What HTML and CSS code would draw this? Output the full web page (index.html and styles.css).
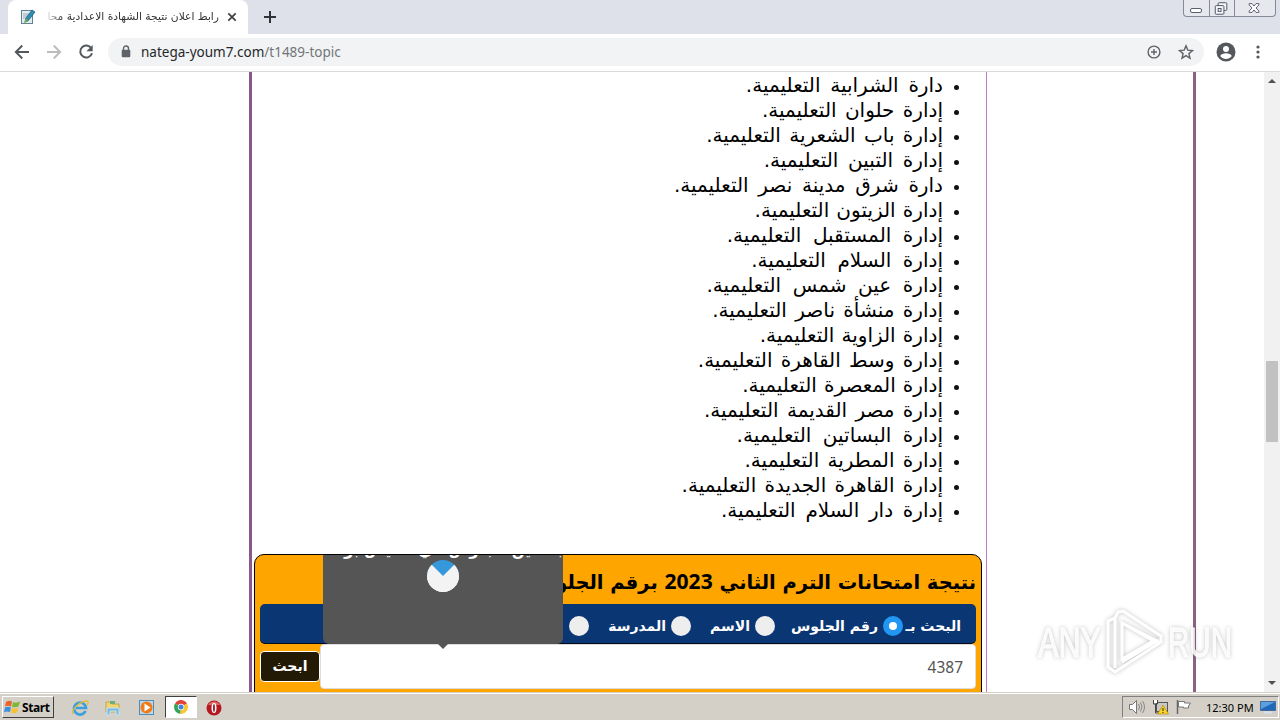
FILE: index.html
```html
<!doctype html>
<html lang="ar">
<head>
	<meta charset="UTF-8">
	<title>رابط اعلان نتيجة الشهادة الاعدادية</title>
	<link rel="stylesheet" href="styles.css">
</head>
<body>
	<div class="tabs">
		<div class="tab">
			<svg class="fav" width="16" height="16" viewBox="0 0 16 16"><rect x="1.500" y="1.500" width="11" height="13" fill="#e3ecf0" stroke="#628291"/><path d="M3 5h6M3 7h5M3 9h3" stroke="#9bb0ba"/><path d="M12 1l3 2-7 9-3 1 1-4z" fill="#2d8fb5" stroke="#23566b" stroke-width=".7"/><path d="M4 14l2-5 2.500 3z" fill="#6eaa57"/></svg>
			<span class="tab-title" dir="rtl">رابط اعلان نتيجة الشهادة الاعدادية محا</span>
			<svg width="10" height="10" viewBox="0 0 10 10"><path d="M1.300 1.300l7.400 7.400M8.700 1.300L1.300 8.700" stroke="#3c4043" stroke-width="1.700"/></svg>
		</div>
		<svg class="plus" width="12" height="12" viewBox="0 0 12 12"><path d="M6 0v12M0 6h12" stroke="#2f3337" stroke-width="2"/></svg>
		<div class="win">
			<svg width="25" height="16" viewBox="0 0 25 16"><rect x="6.500" y="8.500" width="11" height="4" rx="1.500" fill="#fff" stroke="#5a5f70"/></svg>
			<svg width="25" height="16" viewBox="0 0 25 16"><g fill="#f4f5f8" stroke="#4d5262"><rect x="8.500" y="2.500" width="9" height="8" rx="1"/><rect x="5.500" y="5.500" width="9" height="9" rx="1"/><rect x="8.500" y="8.500" width="3" height="3"/></g></svg>
			<svg width="41" height="16" viewBox="0 0 41 16"><path d="M14.500 3.500h3l2 2.500 2-2.500h3v1.500l-3 3 3 3v1.500h-3l-2-2.500-2 2.500h-3V11l3-3-3-3z" fill="#fff" stroke="#5a5f70"/></svg>
		</div>
	</div>
	<div class="toolbar">
		<svg width="16" height="16" viewBox="0 0 16 16"><path d="M15 8H2M8.300 1.500L1.800 8l6.500 6.500" fill="none" stroke="#54585c" stroke-width="1.900"/></svg>
		<svg width="16" height="16" viewBox="0 0 16 16"><path d="M1 8h13M7.700 1.500L14.200 8l-6.500 6.500" fill="none" stroke="#babcbe" stroke-width="1.900"/></svg>
		<svg width="16" height="16" viewBox="0 0 16 16"><path d="M13.300 4.300A6 6 0 1 0 14 9.300" fill="none" stroke="#54585c" stroke-width="2"/><path d="M14.700 1v6.300H8.400z" fill="#54585c"/></svg>
		<div class="address">
			<svg width="10" height="13" viewBox="0 0 10 13"><path d="M2.500 6V3.500a2.500 2.500 0 0 1 5 0V6" fill="none" stroke="#5f6368" stroke-width="1.400"/><rect x=".7" y="4.800" width="8.600" height="7.400" rx="1" fill="#5f6368"/></svg>
			<span class="url">natega-youm7.com<i>/t1489-topic</i></span>
			<svg class="zoom" width="14" height="14" viewBox="0 0 14 14"><path d="M7 4v6M4 7h6" stroke="#5f6368" stroke-width="1.400"/><circle cx="7" cy="7" r="5.900" fill="none" stroke="#5f6368" stroke-width="1.400"/></svg>
			<svg class="star" width="16" height="16" viewBox="0 0 16 16"><path d="M8 1.800l1.800 4.300 4.700.4-3.600 3.100 1.100 4.600L8 11.700l-4 2.500 1.100-4.600-3.600-3.100 4.700-.4z" fill="none" stroke="#5f6368" stroke-width="1.400"/></svg>
		</div>
		<svg class="user" width="20" height="20" viewBox="0 0 20 20"><circle cx="10" cy="10" r="9.500" fill="#54575c"/><circle cx="10" cy="7" r="3" fill="#fff"/><path d="M4.200 14c1.600-3.600 10-3.600 11.600 0-2.800 3.900-8.800 3.900-11.600 0z" fill="#fff"/></svg>
		<svg width="4" height="14" viewBox="0 0 4 14"><g fill="#54575c"><circle cx="2" cy="2" r="1.600"/><circle cx="2" cy="7" r="1.600"/><circle cx="2" cy="12" r="1.600"/></g></svg>
	</div>
	<div class="view">
		<div class="wrap">
			<div class="post" dir="rtl">
				<ul class="list">
					<li class="m">دارة الشرابية التعليمية.</li>
					<li>إدارة حلوان التعليمية.</li>
					<li>إدارة باب الشعرية التعليمية.</li>
					<li class="m">إدارة التبين التعليمية.</li>
					<li class="m">دارة شرق مدينة نصر التعليمية.</li>
					<li class="s">إدارة الزيتون التعليمية.</li>
					<li class="l">إدارة المستقبل التعليمية.</li>
					<li class="l">إدارة السلام التعليمية.</li>
					<li class="l">إدارة عين شمس التعليمية.</li>
					<li>إدارة منشأة ناصر التعليمية.</li>
					<li class="s">إدارة الزاوية التعليمية.</li>
					<li>إدارة وسط القاهرة التعليمية.</li>
					<li class="s">إدارة المعصرة التعليمية.</li>
					<li>إدارة مصر القديمة التعليمية.</li>
					<li class="l">إدارة البساتين التعليمية.</li>
					<li>إدارة المطرية التعليمية.</li>
					<li>إدارة القاهرة الجديدة التعليمية.</li>
					<li class="m">إدارة دار السلام التعليمية.</li>
				</ul>
				<div class="search">
					<div class="title">نتيجة امتحانات الترم الثاني <span>2023</span> برقم الجلو</div>
					<div class="options">
						<span class="by">البحث بـ</span>
						<b class="radio on"></b><span class="o1">رقم الجلوس</span>
						<b class="radio"></b><span class="o2">الاسم</span>
						<b class="radio"></b><span class="o3">المدرسة</span>
						<b class="radio"></b>
					</div>
					<div class="row">
						<div class="input">4387</div>
						<div class="btn">ابحث</div>
					</div>
					<div class="tip">
						<p>بحسين الجلوس في الفيس بوك</p>
						<b class="loader"></b>
					</div>
					<b class="arrow"></b>
				</div>
			</div>
		</div>
		<div class="scroll">
			<b class="up"></b>
			<b class="thumb"></b>
			<b class="down"></b>
		</div>
		<div class="mark">
			<svg width="204" height="72" viewBox="0 0 204 72">
				<g class="mark-text"><text x="4" y="50" textLength="63" lengthAdjust="spacingAndGlyphs">ANY</text><text x="134" y="50" textLength="64" lengthAdjust="spacingAndGlyphs">RUN</text></g>
				<g class="mark-logo"><path d="M88 16v36l33-19z"/><path d="M84 5l5-1 38 25v6L87 61l-6 4-7-5V14l7-3z"/><path d="M81 11v50M88 16l35 20M88 55l37-22"/></g>
			</svg>
		</div>
	</div>
	<div class="taskbar">
		<div class="start">
			<svg width="17" height="16" viewBox="0 0 17 16"><path d="M2 3q3-2 6-.5L7 7.500Q4 6 1 7.500z" fill="#e8642b"/><path d="M9 3q3 1.500 7-.5l-1.500 5q-3 1.500-6.500.3z" fill="#7db83a"/><path d="M1 8.500Q4 7 7 8.500L5.800 13Q3 12 0 13.200z" fill="#3c8edb"/><path d="M8 9q3 1.300 6.300 0L13 13.500q-3 1.500-6 0z" fill="#f8c22e"/></svg>
			<span>Start</span>
		</div>
		<svg class="ie" width="18" height="18" viewBox="0 0 18 18"><path d="M14.500 12a6 6 0 1 1 .5-3H5" fill="none" stroke="#3ba0dc" stroke-width="2.700"/><path d="M2 15C-1 12 9 2 16 2c2 0 1 3 0 4" fill="none" stroke="#e5ba3b" stroke-width="1.300"/></svg>
		<svg class="folder" width="18" height="18" viewBox="0 0 18 18"><path d="M2 3h5l1 2h7v8H2z" fill="#f0d573" stroke="#c6a548"/><path d="M6 2h5v3H6z" fill="#6dae7c"/><path d="M3 9h12v7h-3v-4H6v4H3z" fill="#78b9e1" stroke="#c5e5f5"/></svg>
		<svg class="player" width="18" height="18" viewBox="0 0 18 18"><rect x="1.500" y="1.500" width="14" height="14" fill="#b9d9ef" stroke="#528cb5"/><circle cx="8.500" cy="8.500" r="6" fill="#f17b16"/><path d="M6.500 4.500l6 4-6 4z" fill="#fff"/></svg>
		<div class="active">
			<svg width="14" height="14" viewBox="0 0 14 14"><path d="M7 7L1 3.500a7 7 0 0 1 12 0z" fill="#df4335"/><path d="M7 7l-.5 7A7 7 0 0 1 1 3.500z" fill="#35a456"/><path d="M7 7l6-3.500A7 7 0 0 1 6.500 14z" fill="#f9c632"/><circle cx="7" cy="7" r="3.200" fill="#fff"/><circle cx="7" cy="7" r="2.500" fill="#4285d4"/></svg>
		</div>
		<svg class="opera" width="16" height="16" viewBox="0 0 16 16"><circle cx="8" cy="8" r="7.500" fill="#b51820"/><path d="M2 5a7 7 0 0 1 12 0z" fill="#db6a66"/><ellipse cx="8" cy="8" rx="2.500" ry="5" fill="#fff"/><ellipse cx="8" cy="8" rx=".9" ry="4" fill="#941018"/></svg>
		<div class="tray">
			<svg width="18" height="16" viewBox="0 0 18 16"><path d="M1.500 5.500h3l4-4v13l-4-4h-3z" fill="#fff" stroke="#777"/><path d="M10.500 5q2 3 0 6M12.500 3.500q3 4.500 0 9M14.500 2q4 6 0 12" fill="none" stroke="#888"/></svg>
			<svg width="18" height="16" viewBox="0 0 18 16"><rect x="4.500" y="3.500" width="11" height="9" fill="#c8c8c4" stroke="#555"/><path d="M1.500 1v4h4V1M3.500 5v9h4" fill="none" stroke="#444"/><path d="M2 1h3v3H2z" fill="#fff"/><path d="M11 6l5.500 9h-11z" fill="#fbd42b" stroke="#b78a08" stroke-width=".7"/><path d="M11 9v3M11 13v1" stroke="#222"/></svg>
			<svg width="18" height="16" viewBox="0 0 18 16"><path d="M1.500 1v14" stroke="#666" stroke-width="1.500"/><path d="M2.500 2.500h6v1.500h6l-2 3v2h-5V8h-5z" fill="#fff" stroke="#777"/></svg>
			<span class="clock">12:30 PM</span>
			<svg class="desk" width="16" height="14" viewBox="0 0 16 14"><path d="M.5 1.500h15v9H.5z" fill="#2268b8" stroke="#426b9e"/><path d="M1 2h14L1 9z" fill="#5ba0dd"/><path d="M4 12.500h8" stroke="#d5e2ee" stroke-width="2"/></svg>
		</div>
	</div>
</body>
</html>
```
FILE: styles.css
```css
*{margin:0;padding:0;box-sizing:border-box;}
ul{list-style:none;}
svg{display:block;flex:none;}
body{
	width:1280px;
	height:720px;
	overflow:hidden;
	background:#fff;
	font-family:"DejaVu Sans",sans-serif;
}
.tabs{
	display:flex;
	height:34px;
	background:#dee1e9;
}
.tab{
	display:flex;
	align-items:center;
	width:240px;
	margin-left:8px;
	padding:0 11px 0 12px;
	border-radius:8px 8px 0 0;
	background:#fff;
}
.tab-title{
	flex:1;
	height:18px;
	margin:0 8px 0 8px;
	overflow:hidden;
	white-space:nowrap;
	font-size:10.7px;
	line-height:18px;
	color:#333;
	-webkit-mask-image:linear-gradient(90deg,transparent,#000 20px);
}
.plus{margin:11px 0 0 16px;}
.win{
	display:flex;
	height:17px;
	margin:0 4px 0 auto;
	border:1px solid #858a99;
	border-top:none;
	border-radius:0 0 4px 4px;
	background:#e6e8ee;
}
.win svg+svg{border-left:1px solid #858a99;}
.toolbar{
	display:flex;
	align-items:center;
	height:38px;
	padding:0 20px 2px 14px;
	border-bottom:1px solid #d9dbdd;
}
.toolbar>svg+svg{margin-left:16px;}
.address{
	display:flex;
	align-items:center;
	width:1096px;
	height:28px;
	margin-left:14px;
	padding:0 10px 0 13px;
	border-radius:14px;
	background:#f1f3f4;
}
.url{
	margin-left:10px;
	font:13.5px "Noto Sans",sans-serif;
	color:#252729;
}
.url i{font-style:normal;color:#72767a;}
.zoom{margin-left:auto;}
.star{margin-left:17px;}
.toolbar .user{margin-left:12px;}
.toolbar>.user+svg{margin-left:20px;}
.view{
	position:relative;
	display:flex;
	height:620px;
	overflow:hidden;
}
.wrap{
	width:947px;
	margin-left:249px;
	border:3px solid #8a6384;
	border-width:0 3px;
	border-left-color:#8a588f;
}
.post{
	width:735px;
	height:620px;
	padding:1px 4px 0 2px;
	border-right:1px solid #c17bc8;
}
.list{
	padding-right:39px;
	font-size:20px;
	line-height:25px;
	word-spacing:2px;
	white-space:nowrap;
}
.list li{
	position:relative;
	height:25px;
}
.list .s{word-spacing:.8px;}
.list .m{word-spacing:3.4px;}
.list .l{word-spacing:5.2px;}
.list li:before{
	content:"";
	position:absolute;
	right:-16px;
	top:12px;
	width:5px;
	height:5px;
	border-radius:50%;
	background:#111;
}
.search{
	position:relative;
	width:728px;
	height:150px;
	margin-top:31px;
	padding:0 5px;
	border:1px solid #000;
	border-radius:10px;
	background:#ffa500;
}
.title{
	height:49px;
	font-size:19.5px;
	font-weight:bold;
	line-height:56px;
	white-space:nowrap;
}
.title span{
	font:bold 21px "Noto Sans",sans-serif;
}
.options{
	display:flex;
	align-items:center;
	height:40px;
	padding:4px 15px 0 0;
	border-bottom:1px solid #020b1c;
	border-radius:5px;
	background:#0a3673;
	color:#fff;
	font-size:14px;
	font-weight:bold;
	white-space:nowrap;
}
.by{width:58px;}
.o1{width:103px;}
.o2{width:59px;}
.o3{width:77px;}
.options .radio{
	flex:none;
	width:20px;
	height:20px;
	margin-left:5px;
	border-radius:50%;
	background:#eee;
}
.options .on{
	border:6px solid #2196f3;
	background:#fff;
}
.row{
	display:flex;
	align-items:flex-start;
}
.input{
	width:656px;
	height:45px;
	padding-right:12px;
	border:1px solid #ddd;
	border-radius:4px;
	background:#fff;
	font:15.5px/44px "Noto Sans",sans-serif;
	color:#555;
}
.btn{
	width:60px;
	height:31px;
	margin-top:7px;
	border:1px solid #fff;
	border-radius:4px;
	background:#221a05;
	color:#fff;
	text-align:center;
	font-size:14px;
	font-weight:bold;
	line-height:28px;
}
.tip{
	position:absolute;
	left:68px;
	top:0;
	width:240px;
	height:89px;
	overflow:hidden;
	border-radius:0 0 6px 6px;
	background:#555;
}
.tip p{
	margin-top:-16px;
	height:21px;
	color:#fff;
	font-size:15px;
	font-weight:bold;
	line-height:22px;
	white-space:nowrap;
}
.loader{
	display:block;
	width:32px;
	height:32px;
	margin:0 auto;
	border:16px solid #f3f3f3;
	border-top-color:#3498db;
	border-radius:50%;
}
.arrow{
	position:absolute;
	left:183px;
	top:89px;
	border:5px solid transparent;
	border-top-color:#555;
}
.scroll{
	display:flex;
	flex-direction:column;
	align-items:center;
	width:16px;
	margin-left:auto;
	background:#f1f1f1;
}
.up,.down{
	border:4px solid transparent;
	border-top:none;
	border-bottom:4px solid #505050;
	margin-top:7px;
}
.thumb{
	width:12px;
	height:81px;
	margin-top:278px;
	background:#c1c1c1;
}
.down{
	margin-top:239px;
	border-top:4px solid #505050;
	border-bottom:none;
}
.mark{
	position:absolute;
	left:1034px;
	top:535px;
	filter:drop-shadow(0 0 2px rgba(0,0,0,.25));
}
.mark svg{overflow:visible;}
.mark-text{
	font:43px "Liberation Sans",sans-serif;
	fill:#fff;
	fill-opacity:.85;
	stroke:#fff;
	stroke-width:1;
}
.mark-logo{
	fill:none;
	stroke:#fff;
	stroke-width:3;
}
.taskbar{
	display:flex;
	align-items:center;
	height:28px;
	padding-top:2px;
	border-top:1px solid #d4d0c8;
	box-shadow:inset 0 1px #fff;
	background:#d4d0c8;
}
.start{
	display:flex;
	align-items:center;
	width:52px;
	height:22px;
	margin:-1px 0 0 2px;
	padding-left:1px;
	border:1px solid;
	border-color:#fff #404040 #404040 #fff;
	font:bold 12px "Noto Sans",sans-serif;
}
.start span{
	margin-left:1px;
	letter-spacing:-.4px;
}
.ie{margin-left:17px;}
.folder{margin-left:15px;}
.player{margin-left:16px;}
.active{
	width:32px;
	height:22px;
	margin:-1px 0 0 9px;
	padding:3px 8px;
	border:1px solid;
	border-color:#404040 #fff #fff #404040;
	background:#fff;
}
.opera{margin-left:9px;}
.tray{
	display:flex;
	align-items:center;
	width:157px;
	height:22px;
	margin:-1px 1px 0 auto;
	padding-left:5px;
	border:1px solid;
	border-color:#808080 #fff #fff #808080;
}
.tray svg+svg{margin-left:6px;}
.clock{
	width:46px;
	margin-left:12px;
	font:11px "Noto Sans",sans-serif;
	white-space:nowrap;
}
.tray .desk{margin-left:8px;}
```
